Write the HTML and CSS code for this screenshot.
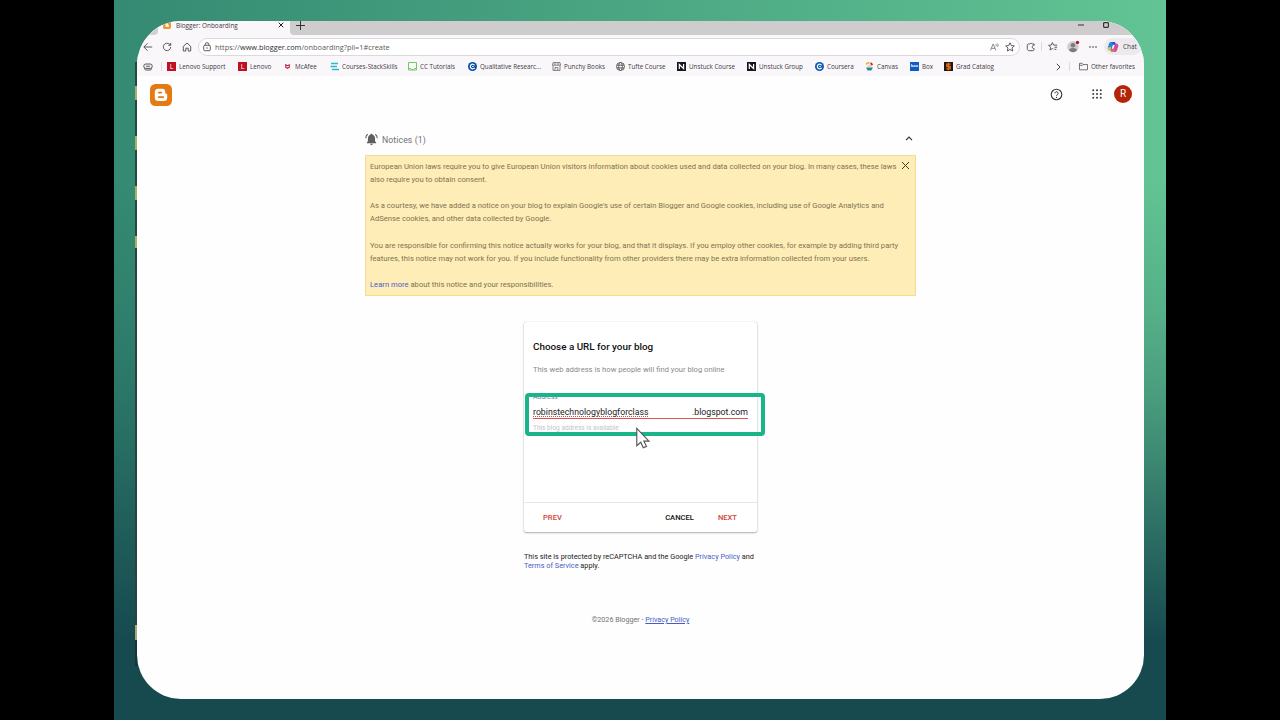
FILE: index.html
```
<!DOCTYPE html>
<html lang="en">
<head>
  <meta charset="UTF-8">
  <meta name="viewport" content="width=device-width, initial-scale=1.0">
  <title>Blogger: Onboarding</title>
  <link rel="stylesheet" href="styles.css">
</head>
<body>

  <div class="stage">
    <div class="window">

      <div class="tabs">
        <div class="old-tab"></div>
        <div class="tab">
          <svg class="tab-icon" viewBox="0 0 22 22"><rect width="22" height="22" rx="4" fill="#e89a35"/><path d="M7 6h6v4h3v6H7z" fill="#fff"/></svg>
          <span class="tab-title">Blogger: Onboarding</span>
          <svg class="tab-close" viewBox="0 0 6 6"><path d="M.7.7l4.6 4.6M5.3.7L.7 5.3"/></svg>
        </div>
        <div class="tab-rest">
          <svg class="new-tab" viewBox="0 0 9 9"><path d="M4.500 0v9M0 4.500h9"/></svg>
          <svg class="minimize" viewBox="0 0 6 6"><path d="M0 3h6"/></svg>
          <svg class="maximize" viewBox="0 0 6 6"><rect x=".6" y=".6" width="4.800" height="4.800" rx=".8"/></svg>
        </div>
      </div>

      <div class="toolbar">
        <svg class="line-icon back" viewBox="0 0 10 10"><path d="M9.2 5H1M4.6 1.2L.8 5l3.8 3.8"/></svg>
        <svg class="line-icon reload" viewBox="0 0 10 10"><path d="M8.7 5a3.7 3.7 0 1 1-1.2-2.8L8.7 3.2M8.7.9v2.4H6.3"/></svg>
        <svg class="line-icon home" viewBox="0 0 10 10"><path d="M1.3 4.4L5 1l3.7 3.4V9H6.2V6.2H3.8V9H1.3z"/></svg>
        <div class="address-bar">
          <svg class="line-icon lock" viewBox="0 0 10 10"><rect x="1.7" y="3.3" width="6.6" height="5.4" rx="1"/><path d="M3.2 3.3V2.5a1.8 1.8 0 0 1 3.6 0v.8M4.200 6h1.600"/></svg>
          <span class="url"><span class="dim">https://</span>www.blogger.com<span class="dim">/onboarding?pli=1#create</span></span>
          <svg class="read-aloud" viewBox="0 0 10 9"><path d="M.5 8.300L3.300 1.300h.4l2.800 7M1.600 6h3.800M6.600 1.200c.6.600.6 1.900 0 2.500M8.200.5c1 1.100 1 2.900 0 4"/></svg>
          <svg class="line-icon star" viewBox="0 0 10 10"><path d="M5 .8l1.3 2.8 3 .3L7 6l.7 3L5 7.5 2.3 9 3 6 .7 3.9l3-.3z"/></svg>
        </div>
        <svg class="line-icon ext" viewBox="0 0 10 10"><path d="M8.200 3.300V2H6.100a1.200 1.200 0 0 0-2.200 0H2.500C1.700 2 1.300 2.600 1.300 3.500v3C1.300 8 2 8.700 3.500 8.700h2.900c1.200 0 1.800-.6 1.800-1.400v-.6c-1.300 0-1.900-.6-1.900-1.700s.6-1.700 1.900-1.700z"/></svg>
        <span class="divider"></span>
        <svg class="line-icon favs" viewBox="0 0 10 10"><path d="M5.400 7L4.500 6.500 2 8l.6-2.800L.6 3.400l2.600-.3L4.400.6l1.200 2.500h3.600M6.400 5.200h2.800M6.400 7.300h2"/></svg>
        <svg class="profile" viewBox="0 0 13 13"><circle cx="6" cy="6.800" r="5.700" fill="#cfcccf"/><circle cx="6" cy="5.200" r="2.300" fill="#7e7a7c"/><path d="M2.200 10.500c0-2 1.600-2.600 3.800-2.600s3.800.6 3.800 2.600a5.700 5.700 0 0 1-7.600 0z" fill="#7e7a7c"/><circle cx="10.500" cy="2.400" r="1.700" fill="#b5132c"/></svg>
        <svg class="more" viewBox="0 0 8 2"><circle cx="1" cy="1" r=".8"/><circle cx="4" cy="1" r=".8"/><circle cx="7" cy="1" r=".8"/></svg>
        <div class="chat">
          <svg class="copilot" viewBox="0 0 12 12"><path d="M4 1h4l-2 8.500H3C1 9.500.400 8 .8 6.600L2 2.800C2.300 1.600 3 1 4 1z" fill="#2a86dc"/><path d="M8 2.500h1c2 0 2.600 1.500 2.200 3L10 9.200C9.700 10.400 9 11 8 11H4z" fill="#d14c9f"/><path d="M1 6.500L4 6l-.5 3.500H3c-1.500 0-2.400-1-2-3z" fill="#f0c334"/><path d="M5 1h3l.7 2.500H6z" fill="#2556c4"/><path d="M4 11l1-2.500h3L7.500 11z" fill="#ef6f4c"/><path d="M4.700 7.700L6 4h1.600L6.400 7.700z" fill="#fff"/></svg>
          <span>Chat</span>
        </div>
      </div>

      <div class="bookmarks">
        <svg class="stack" viewBox="0 0 10 8"><rect x=".8" y="1" width="8.400" height="4.400" rx="2"/><path d="M3 3.200h4M1.500 5.200C1.500 6.500 2.300 7 3.300 7H7c1 0 1.600-.5 1.600-1.700"/></svg>
        <span class="divider"></span>
        <div class="mark lenovo-support"><i class="lenovo">L</i><span>Lenovo Support</span></div>
        <div class="mark lenovo-home"><i class="lenovo">L</i><span>Lenovo</span></div>
        <div class="mark mcafee"><svg viewBox="0 0 9 9"><path d="M2.700 2.800l1.800.9 1.800-.9v2.400L4.500 6.300 2.700 5.200z" fill="none" stroke="#b82040" stroke-width="1.100"/></svg><span>McAfee</span></div>
        <div class="mark stack-skills"><svg viewBox="0 0 9 9"><path d="M1 1.500h7M.5 4.500H7M2 7.500h7" stroke="#2bb9c6" stroke-width="1.500"/></svg><span>Courses-StackSkills</span></div>
        <div class="mark tutorials"><svg viewBox="0 0 9 9"><path d="M.5.500h8v7.500h-8zM.5 6.500h2l1 1h2l1-1h2" fill="#f5fff2" stroke="#76c46b"/></svg><span>CC Tutorials</span></div>
        <div class="mark research"><svg viewBox="0 0 9 9"><circle cx="4.500" cy="4.500" r="4.500" fill="#0b4fa8"/><path d="M6.600 3.300a2.300 2.300 0 1 0 0 2.400M4.200 4.500h1.500" fill="none" stroke="#fff" stroke-width="1.200"/></svg><span>Qualitative Researc...</span></div>
        <div class="mark punchy"><svg viewBox="0 0 9 9"><path d="M1 .6h7l.6 2.600H.4zM1 3.400v5h7v-5M3 .6v2.600M6 .6v2.600M3 8.400V5.500h2.800v2.900" fill="none" stroke="#666" stroke-width=".8"/></svg><span>Punchy Books</span></div>
        <div class="mark tufte"><svg viewBox="0 0 9 9"><g fill="none" stroke="#444" stroke-width=".8"><circle cx="4.500" cy="4.500" r="4"/><ellipse cx="4.500" cy="4.500" rx="1.800" ry="4"/><path d="M.8 3.200h7.400M.8 5.900h7.400"/></g></svg><span>Tufte Course</span></div>
        <div class="mark unstuck"><svg viewBox="0 0 9 9"><path d="M0 0h9v9H0z" fill="#15151f"/><path d="M2.300 7V2.500l4.300 4V2" fill="none" stroke="#fff" stroke-width="1.200"/></svg><span>Unstuck Course</span></div>
        <div class="mark unstuck-group"><svg viewBox="0 0 9 9"><path d="M0 0h9v9H0z" fill="#15151f"/><path d="M2.300 7V2.500l4.300 4V2" fill="none" stroke="#fff" stroke-width="1.200"/></svg><span>Unstuck Group</span></div>
        <div class="mark coursera"><svg viewBox="0 0 9 9"><circle cx="4.500" cy="4.500" r="4.500" fill="#0b5cb5"/><path d="M6.600 3.300a2.300 2.300 0 1 0 0 2.400M4.200 4.500h1.500" fill="none" stroke="#fff" stroke-width="1.200"/></svg><span>Coursera</span></div>
        <div class="mark canvas"><svg viewBox="0 0 9 9"><path d="M1.200 2.500C1.800 1.100 3 .6 4.400.8" fill="none" stroke="#e8a820" stroke-width="1.600"/><path d="M5.500 1l2 2" stroke="#c5352b" stroke-width="1.800"/><path d="M1 5.600h7L6.300 8.500H2.700z" fill="#2c86a0"/><path d="M2.500 4h4" stroke="#e9b43c"/></svg><span>Canvas</span></div>
        <div class="mark box"><i class="box-logo">box</i><span>Box</span></div>
        <div class="mark catalog"><svg viewBox="0 0 9 9"><path d="M0 0h9v9H0z" fill="#25160d"/><path d="M6.700 2.200H2.800v2.300h3.400v2.300H2.300M4.500.800v7.500" fill="none" stroke="#e36f1b" stroke-width="1.300"/></svg><span>Grad Catalog</span></div>
        <svg class="chevron" viewBox="0 0 5 8"><path d="M.8.800L4 4 .8 7.200"/></svg>
        <span class="divider"></span>
        <div class="mark other"><svg viewBox="0 0 9 9"><path d="M.5 1.300h2.700l1 1.200h4.300v5.300h-8zM.5 3.300h3l1-.8" fill="none" stroke="#555" stroke-width=".8"/></svg><span>Other favorites</span></div>
      </div>

      <div class="page">
        <header class="header">
          <svg class="logo" viewBox="0 0 22 22"><rect width="22" height="22" rx="5.500" fill="#e57a12"/><path d="M8.300 4.800h3.600a3.400 3.400 0 0 1 3.400 3.400v.7c0 .5.400.8.900.8.600 0 1 .4 1 1v2.900a3.500 3.500 0 0 1-3.500 3.500H8.300a3.500 3.500 0 0 1-3.500-3.500V8.300a3.500 3.500 0 0 1 3.500-3.500z" fill="#fff"/><path d="M8.600 8.600h2.800M8.600 13.100h4.800" stroke="#e57a12" stroke-width="1.600" stroke-linecap="round"/></svg>
          <svg class="help" viewBox="0 0 12 12"><circle cx="6" cy="6" r="4.900" fill="none" stroke="#333"/><path d="M4.500 4.900a1.500 1.500 0 1 1 2.400 1.200c-.6.400-.9.700-.9 1.200" fill="none" stroke="#333" stroke-width=".9"/><circle cx="6" cy="8.700" r=".6" fill="#333"/></svg>
          <svg class="apps" viewBox="0 0 9 9"><g fill="#3c3c3f"><circle cx="1.100" cy="1.100" r=".9"/><circle cx="4.500" cy="1.100" r=".9"/><circle cx="7.900" cy="1.100" r=".9"/><circle cx="1.100" cy="4.500" r=".9"/><circle cx="4.500" cy="4.500" r=".9"/><circle cx="7.900" cy="4.500" r=".9"/><circle cx="1.100" cy="7.900" r=".9"/><circle cx="4.500" cy="7.900" r=".9"/><circle cx="7.900" cy="7.900" r=".9"/></g></svg>
          <div class="avatar">R</div>
        </header>

        <section class="notices">
          <div class="notices-head">
            <svg class="bell" viewBox="0 0 12 12"><path d="M6 .8c.6 0 1 .4 1 .9C8.600 2.200 9.300 3.500 9.300 5v2.700l1 1v.7H1.700v-.7l1-1V5c0-1.500.7-2.800 2.300-3.300 0-.5.4-.9 1-.9zM4.900 10h2.200c0 .7-.5 1.200-1.100 1.200S4.900 10.700 4.900 10z" fill="#5f5f62"/><path d="M.7 4.800C.7 3.200 1.400 2 2.500 1.200M11.300 4.800c0-1.600-.7-2.800-1.800-3.600" fill="none" stroke="#5f5f62"/></svg>
            <span>Notices (1)</span>
            <svg class="collapse" viewBox="0 0 8 5"><path d="M1 4.200l3-3 3 3"/></svg>
          </div>
          <div class="notice">
            <svg class="dismiss" viewBox="0 0 9 9"><path d="M1 1l7 7M8 1L1 8"/></svg>
            <p>European Union laws require you to give European Union visitors information about cookies used and data collected on your blog. In many cases, these laws<br>also require you to obtain consent.</p>
            <p>As a courtesy, we have added a notice on your blog to explain Google's use of certain Blogger and Google cookies, including use of Google Analytics and<br>AdSense cookies, and other data collected by Google.</p>
            <p>You are responsible for confirming this notice actually works for your blog, and that it displays. If you employ other cookies, for example by adding third party<br>features, this notice may not work for you. If you include functionality from other providers there may be extra information collected from your users.</p>
            <p><a href="#">Learn more</a> about this notice and your responsibilities.</p>
          </div>
        </section>

        <section class="card">
          <div class="card-body">
            <h1>Choose a URL for your blog</h1>
            <p class="subtitle">This web address is how people will find your blog online</p>
            <label class="field-label">Address</label>
            <div class="field">
              <span class="typed">robinstechnologyblogforclass</span>
              <span class="domain">.blogspot.com</span>
            </div>
            <p class="hint">This blog address is available</p>
          </div>
          <div class="card-actions">
            <button class="red prev" type="button">PREV</button>
            <button class="cancel" type="button">CANCEL</button>
            <button class="red" type="button">NEXT</button>
          </div>
          <div class="highlight"></div>
          <svg class="cursor" viewBox="0 0 16 24"><path d="M1.500 1.500v18l4.200-3.600 2.600 5.800 3.300-1.500-2.700-5.500h5.300z" fill="#fff" stroke="#555" stroke-width="1.200"/></svg>
        </section>

        <p class="captcha">This site is protected by reCAPTCHA and the Google <a href="#">Privacy Policy</a> and<br><a href="#">Terms of Service</a> apply.</p>

        <footer class="footer">©2026 Blogger - <a href="#">Privacy Policy</a></footer>
      </div>

    </div>
  </div>

</body>
</html>
```

FILE: styles.css
```
* {
  box-sizing: border-box;
}

body {
  margin: 0;
  width: 1280px;
  height: 720px;
  background: #000;
  font-family: Roboto, sans-serif;
  overflow: hidden;
}

svg {
  display: block;
  flex: none;
}

p, h1 {
  margin: 0;
}

a {
  color: #4a5cc8;
  text-decoration: none;
}

.stage {
  position: relative;
  width: 1052px;
  height: 720px;
  margin-left: 114px;
  padding: 21px 22px 21px 23px;
  background:
    linear-gradient(to bottom, rgba(22, 74, 79, 0) 180px, rgba(22, 74, 79, 0.16) 310px, rgba(22, 74, 79, 0.3) 387px, rgba(22, 74, 79, 0.48) 456px, rgba(22, 74, 79, 0.65) 514px, rgba(22, 74, 79, 0.82) 575px, #164a4f 640px),
    linear-gradient(to right, #348a72, #62c494);
}

/* sliver of the desktop behind the window */
.stage::before {
  content: "";
  position: absolute;
  left: 21px;
  top: 62px;
  width: 6px;
  height: 604px;
  background: linear-gradient(#234a3c 24px, #a9b06c 24px 38px, #234a3c 38px 74px, #a9b06c 74px 88px, #234a3c 88px 124px, #a9b06c 124px 138px, #234a3c 138px 174px, #a9b06c 174px 186px, #29443f 186px 563px, #a9a873 563px 578px, #173538 578px);
}

.window {
  position: relative;
  width: 1007px;
  height: 678px;
  background: #fefefe;
  border-radius: 44px;
  overflow: hidden;
}

/* browser chrome */
.tabs, .toolbar, .bookmarks {
  display: flex;
  align-items: center;
  font-family: "Open Sans", sans-serif;
  color: #3a3a3c;
  white-space: nowrap;
}

.tabs {
  height: 15px;
  background: #faf7fb;
  align-items: stretch;
}

.old-tab {
  width: 21px;
  height: 14px;
  background: #d3d0d3;
  border-bottom-right-radius: 4px;
}

.tab {
  display: flex;
  width: 132px;
  padding-left: 5px;
}

.tab-icon {
  width: 8px;
  height: 8px;
}

.tab-title {
  margin-left: 5px;
  font-size: 6.4px;
  line-height: 9px;
}

.tab-close {
  width: 6px;
  height: 6px;
  margin: 1px 6px 0 auto;
  stroke: #222;
}

.tab-rest {
  display: flex;
  flex: 1;
  height: 14px;
  background: #cfccce;
  border-bottom-left-radius: 4px;
  fill: none;
  stroke: #333;
}

.new-tab {
  width: 9px;
  height: 9px;
  margin-left: 6px;
}

.minimize {
  width: 6px;
  height: 6px;
  margin: 1px 19px 0 auto;
}

.maximize {
  width: 6px;
  height: 6px;
  margin: 1px 35px 0 0;
  stroke-width: 1.2;
}

.toolbar {
  height: 21px;
  padding-left: 6px;
  background: #faf7fb;
}

.line-icon {
  width: 10px;
  height: 10px;
  fill: none;
  stroke: #4a4a4c;
  stroke-width: 0.9;
}

.back {
  margin-right: 9px;
}

.reload {
  margin-right: 10px;
}

.home {
  margin-right: 6px;
}

.address-bar {
  display: flex;
  align-items: center;
  width: 822px;
  height: 18px;
  padding: 0 4px 0 3px;
  background: #fff;
  border: 1px solid #dcd9de;
  border-radius: 9px;
}

.url {
  margin-left: 3px;
  font-size: 7.33px;
  color: #2c2c2e;
}

.url .dim {
  color: #5a5a5c;
}

.read-aloud {
  width: 9px;
  height: 8px;
  margin: 0 6px 0 auto;
  fill: none;
  stroke: #5a5a5c;
  stroke-width: 0.8;
}

.ext {
  margin-left: 6px;
}

.divider {
  width: 1px;
  height: 9px;
  background: #dcd9dd;
}

.toolbar .divider {
  margin: 0 6px 0 5px;
}

.profile {
  width: 13px;
  height: 13px;
  margin-left: 9px;
}

.more {
  width: 8px;
  height: 2px;
  margin-left: 9px;
  fill: #333;
}

.chat {
  display: flex;
  align-items: center;
  gap: 4px;
  width: 38px;
  height: 17px;
  margin-left: 7px;
  padding-left: 3px;
  background: #edeaee;
  border-radius: 9px;
  font-size: 6.4px;
}

.copilot {
  width: 12px;
  height: 12px;
}

.bookmarks {
  height: 19px;
  padding-left: 6px;
  background: #faf7fb;
  font-size: 6.27px;
}

.stack {
  width: 10px;
  height: 8px;
  margin-right: 8px;
  fill: none;
  stroke: #555;
}

.stack + .divider {
  margin-right: 5px;
}

.mark {
  display: flex;
  align-items: center;
  gap: 3px;
  flex: none;
}

.mark svg, .lenovo, .box-logo {
  width: 9px;
  height: 9px;
  font-style: normal;
  text-align: center;
  color: #fff;
}

.lenovo {
  background: #bd1220;
  font-size: 7px;
  line-height: 9px;
}

.box-logo {
  background: #0d5ec4;
  font-size: 4px;
  line-height: 8px;
  font-weight: bold;
}

.lenovo-support { width: 71px; }
.lenovo-home { width: 45px; }
.mcafee { width: 47px; }
.stack-skills { width: 78px; }
.tutorials { width: 60px; }
.research { width: 84px; }
.punchy { width: 64px; }
.tufte { width: 61px; }
.unstuck { width: 70px; }
.unstuck-group { width: 68px; }
.coursera { width: 50px; }
.canvas { width: 45px; }
.box { width: 34px; }
.catalog { width: 51px; }

.chevron {
  width: 5px;
  height: 8px;
  margin: 0 8px 0 61px;
  fill: none;
  stroke: #444;
}

.other {
  margin-left: 9px;
}

/* blogger page */
.header {
  display: flex;
  align-items: center;
  height: 38px;
  padding: 0 12px 2px 13px;
}

.logo {
  width: 22px;
  height: 22px;
  margin-top: 2px;
}

.help {
  width: 13px;
  height: 13px;
  margin: 0 29px 0 auto;
}

.apps {
  width: 10px;
  height: 10px;
  margin-right: 12px;
}

.avatar {
  width: 18px;
  height: 18px;
  border-radius: 50%;
  background: #b32408;
  color: #fff;
  font-size: 10px;
  line-height: 18px;
  text-align: center;
}

.notices {
  width: 551px;
  margin: 17px 0 0 228px;
}

.notices-head {
  display: flex;
  align-items: center;
  height: 17px;
  font-size: 8.7px;
  letter-spacing: 0.1px;
  color: #707073;
}

.bell {
  width: 13px;
  height: 13px;
  margin-right: 4px;
}

.collapse {
  width: 8px;
  height: 5px;
  margin: 0 3px 2px auto;
  fill: none;
  stroke: #333;
  stroke-width: 1.2;
}

.notice {
  position: relative;
  height: 141px;
  margin-top: 7px;
  padding: 4px;
  background: #feedb6;
  border: 1px solid #f3dd95;
  font-size: 7.635px;
  line-height: 13.1px;
  color: #807352;
  white-space: nowrap;
}

.notice p {
  margin-bottom: 13.1px;
}

.dismiss {
  position: absolute;
  top: 5px;
  right: 5px;
  width: 9px;
  height: 9px;
  stroke: #40392a;
}

.card {
  position: relative;
  display: flex;
  flex-direction: column;
  width: 233px;
  height: 210px;
  margin: 26px 0 0 387px;
  border-radius: 2px;
  background: #fff;
  box-shadow: 0 1px 2px rgba(0, 0, 0, 0.3), 0 0 1px rgba(0, 0, 0, 0.25);
}

.card-body {
  flex: 1;
  padding: 18px 9px 0;
}

h1 {
  font-size: 9.87px;
  line-height: 13px;
  font-weight: 500;
  color: #111;
}

.subtitle {
  margin-top: 12px;
  font-size: 7.64px;
  line-height: 10px;
  color: #8a8a8a;
}

.field-label {
  display: block;
  margin-top: 18px;
  font-size: 6.7px;
  line-height: 9px;
  color: #6878a8;
}

.field {
  display: flex;
  justify-content: space-between;
  height: 17px;
  border-bottom: 1px solid #d9584a;
  font-size: 8.75px;
  line-height: 20px;
  color: #222;
}

.typed {
  text-decoration: underline dotted #d0485a 1px;
  text-underline-offset: 1px;
}

.hint {
  margin-top: 5px;
  font-size: 6.55px;
  line-height: 9px;
  color: #c4c4c4;
}

.card-actions {
  display: flex;
  align-items: center;
  height: 30px;
  padding: 0 20px 0 19px;
  border-top: 1px solid #e8e8e8;
}

button {
  padding: 0;
  border: 0;
  background: none;
  font: 500 7.6px Roboto, sans-serif;
  color: #111;
}

.red {
  color: #d04436;
}

.prev {
  margin-right: auto;
}

.cancel {
  margin-right: 24px;
}

.highlight {
  position: absolute;
  left: 1px;
  top: 71px;
  width: 240px;
  height: 43px;
  border: 4px solid #1ab489;
  border-radius: 4px;
}

.cursor {
  position: absolute;
  left: 111px;
  top: 105px;
  width: 16px;
  height: 23px;
}

.captcha {
  margin: 20px 0 0 387px;
  font-size: 7.31px;
  line-height: 9px;
  color: #222;
}

.footer {
  margin-top: 44px;
  font-size: 7.17px;
  line-height: 12px;
  text-align: center;
  color: #707070;
}

.footer a {
  text-decoration: underline;
}
```
